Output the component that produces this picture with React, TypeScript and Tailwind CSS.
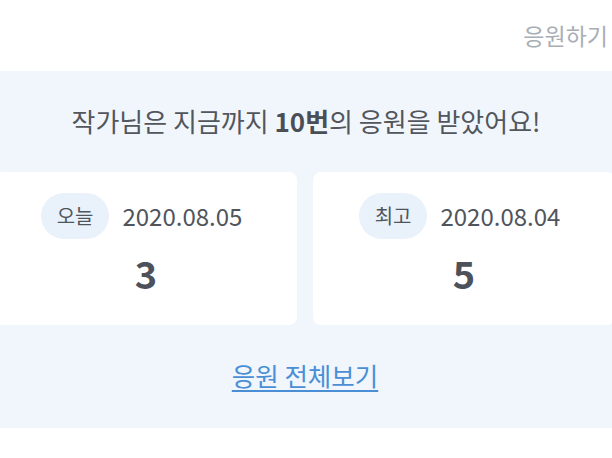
import React from 'react';

const font = { fontFamily: '"Noto Sans CJK KR", "Noto Sans", sans-serif' };

interface StatCardProps {
  label: string;
  date: string;
  count: number;
}

const StatCard: React.FC<StatCardProps> = ({ label, date, count }) => (
  <div className="w-[302px] h-[153px] shrink-0 rounded-lg bg-white flex flex-col items-center pt-[21px]">
    <div className="flex items-center h-[46px] pr-[9px]">
      <span className="h-[46px] px-[16px] rounded-full bg-[#e9f1fa] flex items-center text-[20px] text-[#50555c]">{label}</span>
      <span className="ml-[13px] text-[24px] text-[#50555c] leading-none">{date}</span>
    </div>
    <p className="mt-[7px] text-[38px] font-bold text-[#4d525a] leading-[54px]">{count}</p>
  </div>
);

export default function App() {
  return (
    <div className="w-[612px] h-[458px] bg-white overflow-hidden" style={font}>
      <header className="h-[71px] flex items-center justify-end pr-[4px]">
        <span className="text-[23px] text-[#a9aeb5]">응원하기</span>
      </header>

      <section className="bg-[#f1f6fc]">
        <div className="h-[101px] flex items-center justify-center pb-[3px]">
          <p className="text-[26px] text-[#52565d]">
            작가님은 지금까지 <strong className="font-bold text-[#4a4f57]">10번</strong>의 응원을 받았어요!
          </p>
        </div>

        <div className="flex justify-center gap-[16px] pr-[2px]">
          <StatCard label="오늘" date="2020.08.05" count={3} />
          <StatCard label="최고" date="2020.08.04" count={5} />
        </div>

        <div className="h-[103px] flex items-center justify-center pb-[2px] pr-[2px]">
          <a href="#" className="text-[25.5px] text-[#4a8fd6] underline underline-offset-[4px]">응원 전체보기</a>
        </div>
      </section>
    </div>
  );
}
